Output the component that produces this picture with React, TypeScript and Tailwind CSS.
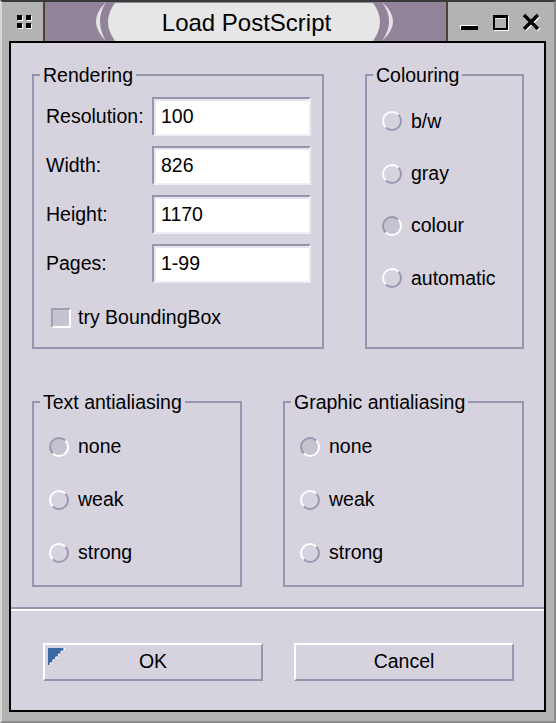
import type { ReactNode } from "react";

const GROUP_LINE = "border-[#9595ad]";

function Group({
  title,
  className,
  children,
}: {
  title: string;
  className: string;
  children: ReactNode;
}) {
  return (
    <div className={`relative border-2 ${GROUP_LINE} ${className}`}>
      <span className="absolute left-[6px] top-[-11px] bg-[#d6d3df] px-[3px] leading-[20px] whitespace-nowrap">
        {title}
      </span>
      {children}
    </div>
  );
}

function Field({ label, value }: { label: string; value: string }) {
  return (
    <div className="flex items-center">
      <span className="w-[106px]">{label}</span>
      <div className="flex h-[39px] w-[159px] items-center border-2 border-t-[#9595ad] border-l-[#9595ad] border-b-[#eeecf4] border-r-[#eeecf4] bg-white pl-[7px] shadow-[inset_2px_2px_0_#e6e4ee]">
        {value}
      </div>
    </div>
  );
}

function Radio({
  label,
  checked = false,
  rowClass,
}: {
  label: string;
  checked?: boolean;
  rowClass: string;
}) {
  return (
    <div className={`flex items-center ${rowClass}`}>
      <span
        className={
          checked
            ? "h-[20px] w-[20px] rounded-full border-2 border-t-[#9a98ae] border-l-[#9a98ae] border-b-white border-r-white bg-[#c5c3cf]"
            : "h-[20px] w-[20px] rounded-full border-2 border-t-white border-l-white border-b-[#9a98ae] border-r-[#9a98ae]"
        }
      />
      <span className="ml-[9px]">{label}</span>
    </div>
  );
}

function Button({ label, focused = false }: { label: string; focused?: boolean }) {
  return (
    <div className="relative flex h-[38px] w-[220px] items-center justify-center border-2 border-t-white border-l-white border-b-[#9595ad] border-r-[#9595ad]">
      {focused && (
        <svg className="absolute left-[3px] top-[3px]" width="17" height="18" viewBox="0 0 17 18">
          <polygon points="0,0 17,0 0,18" fill="#3b69a3" />
          <line x1="17" y1="0" x2="0" y2="18" stroke="#ffffff" strokeWidth="1.5" strokeDasharray="2 2" />
        </svg>
      )}
      <span>{label}</span>
    </div>
  );
}

function TitleBar() {
  return (
    <div className="flex h-[39px] bg-[#b3b3b3]">
      <div className="w-[41px]">
        <svg width="41" height="39" viewBox="0 0 41 39">
          {[
            [15, 13],
            [24, 13],
            [15, 21],
            [24, 21],
          ].map(([x, y]) => (
            <g key={`${x}-${y}`}>
              <rect x={x + 1} y={y + 1} width="5" height="5" fill="#ffffff" />
              <rect x={x} y={y} width="5" height="5" fill="#000000" />
            </g>
          ))}
        </svg>
      </div>
      <div className="w-[2px] bg-[#4a4238]" />
      <div className="relative flex w-[401px] items-center justify-center bg-[#918498]">
        <svg className="absolute left-0 top-0" width="401" height="39" viewBox="0 0 401 39">
          <path d="M61,0 Q41,19.5 61,39 Q49,19.5 61,0 Z" fill="#e4e2e6" />
          <path d="M70,1 L328,1 Q342,19.5 328,39 L70,39 Q56,19.5 70,1 Z" fill="#e6e6e6" />
          <path d="M337,0 Q359,19.5 337,39 Q351,19.5 337,0 Z" fill="#e4e2e6" />
        </svg>
        <span className="relative translate-x-[1px] translate-y-[1px] text-[24px] leading-[39px] text-black">
          Load PostScript
        </span>
      </div>
      <div className="w-[2px] bg-[#4a4238]" />
      <div className="w-[106px]">
        <svg width="106" height="39" viewBox="0 0 106 39">
          <rect x="12" y="23" width="17" height="4" fill="#ffffff" />
          <rect x="13" y="24" width="17" height="4" fill="#000000" />
          <rect x="46" y="14" width="15" height="15" fill="#ffffff" />
          <rect x="45" y="13" width="15" height="15" fill="#000000" />
          <rect x="47" y="16" width="11" height="10" fill="#b3b3b3" />
          <rect x="47" y="16" width="11" height="1" fill="#e8e8e8" />
          <path d="M77,14 L91,28 M91,14 L77,28" stroke="#ffffff" strokeWidth="3.5" />
          <path d="M76,13 L90,27 M90,13 L76,27" stroke="#000000" strokeWidth="3.5" />
        </svg>
      </div>
    </div>
  );
}

export default function App() {
  return (
    <div className="h-[723px] w-[556px] border-t-2 border-l-2 border-r-2 border-b-2 border-t-[#3a3a3a] border-l-[#d8d8d8] border-r-[#8c8c8c] border-b-[#8c8c8c] bg-[#b3b3b3] font-['Liberation_Sans',Arial,sans-serif] text-[19.5px] text-black">
      <TitleBar />
      <div className="ml-[7px] h-[671px] w-[537px] border-2 border-black bg-[#d6d3df]">
        <div className="flex flex-col gap-[52px] pl-[21px] pt-[31px]">
          <div className="flex gap-[41px]">
            <Group title="Rendering" className="h-[275px] w-[292px] pl-[12px] pt-[21px]">
              <div className="flex flex-col gap-[10px]">
                <Field label="Resolution:" value="100" />
                <Field label="Width:" value="826" />
                <Field label="Height:" value="1170" />
                <Field label="Pages:" value="1-99" />
              </div>
              <div className="ml-[5px] mt-[20px] flex items-center">
                <span className="h-[20px] w-[20px] border-2 border-t-[#a09eb2] border-l-[#a09eb2] border-b-white border-r-white bg-[#c5c3cf]" />
                <span className="ml-[7px]">try BoundingBox</span>
              </div>
            </Group>
            <Group title="Colouring" className="h-[275px] w-[159px] pl-[15px] pt-[19px]">
              <Radio label="b/w" rowClass="h-[52.4px]" />
              <Radio label="gray" rowClass="h-[52.4px]" />
              <Radio label="colour" checked rowClass="h-[52.4px]" />
              <Radio label="automatic" rowClass="h-[52.4px]" />
            </Group>
          </div>
          <div className="flex gap-[41px]">
            <Group title="Text antialiasing" className="h-[186px] w-[210px] pl-[15px] pt-[17.5px]">
              <Radio label="none" checked rowClass="h-[53px]" />
              <Radio label="weak" rowClass="h-[53px]" />
              <Radio label="strong" rowClass="h-[53px]" />
            </Group>
            <Group title="Graphic antialiasing" className="h-[186px] w-[241px] pl-[15px] pt-[17.5px]">
              <Radio label="none" checked rowClass="h-[53px]" />
              <Radio label="weak" rowClass="h-[53px]" />
              <Radio label="strong" rowClass="h-[53px]" />
            </Group>
          </div>
        </div>
        <div className="mt-[20px] h-[2px] bg-[#9595ad]" />
        <div className="h-[2px] bg-white" />
        <div className="mt-[32px] flex gap-[31px] pl-[32px]">
          <Button label="OK" focused />
          <Button label="Cancel" />
        </div>
      </div>
    </div>
  );
}
